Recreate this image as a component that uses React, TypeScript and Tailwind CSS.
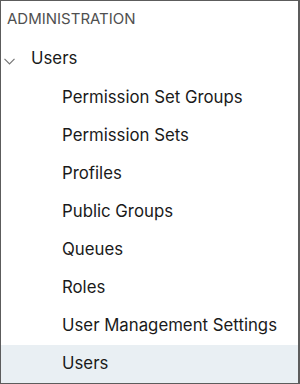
const children = [
  "Permission Set Groups",
  "Permission Sets",
  "Profiles",
  "Public Groups",
  "Queues",
  "Roles",
  "User Management Settings",
  "Users",
];

export default function App() {
  return (
    <div
      className="w-[300px] h-[384px] bg-white border border-[#5c5c5c] border-r-2 overflow-hidden text-[#1a1a1a]"
      style={{ fontFamily: "Inter, 'Liberation Sans', sans-serif" }}
    >
      <div className="h-[37px] pl-[6px] flex items-center text-[15px] text-[#505050]">
        ADMINISTRATION
      </div>
      <div className="h-[41px] pl-[3px] flex items-center text-[16.8px]">
        <svg width="11" height="7" viewBox="0 0 11 7" className="mt-[5px] mr-[16px]">
          <polyline points="0.5,0.8 5.5,5.8 10.5,0.8" fill="none" stroke="#777" strokeWidth="1.2" />
        </svg>
        <span>Users</span>
      </div>
      <ul>
        {children.map((name, i) => (
          <li
            key={name}
            className={
              "h-[38px] pl-[61px] flex items-center text-[16.8px] " +
              (i === children.length - 1 ? "bg-[#e9eff3]" : "")
            }
          >
            {name}
          </li>
        ))}
      </ul>
    </div>
  );
}
